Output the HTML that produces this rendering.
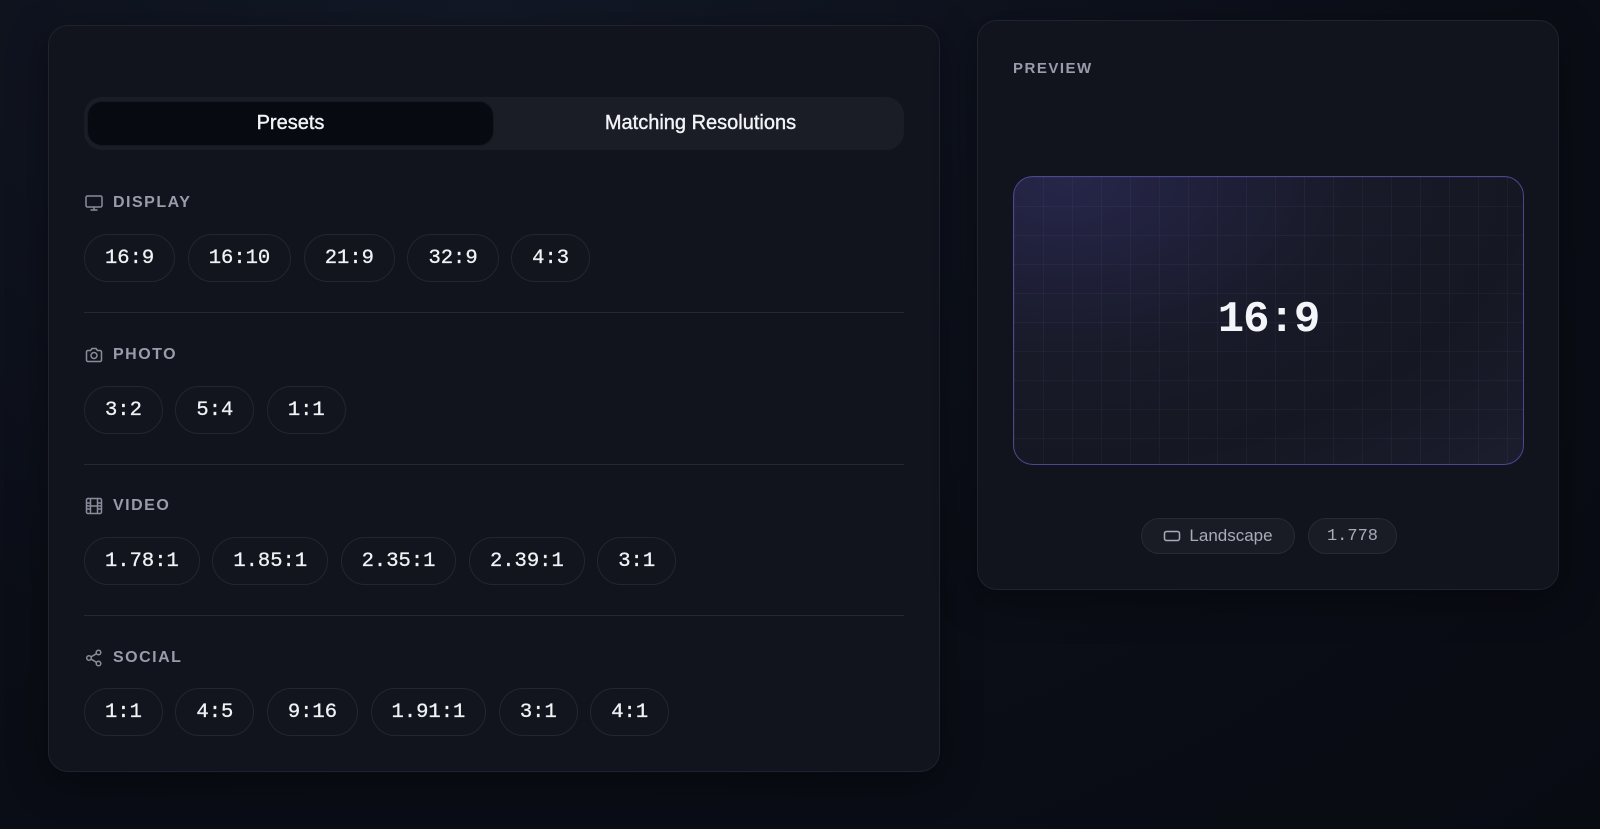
<!DOCTYPE html>
<html><head><meta charset="utf-8"><style>
*{box-sizing:border-box;margin:0;padding:0}
body{width:1600px;height:829px;overflow:hidden;background:radial-gradient(ellipse at 30% 0%,#121826 0%,#0b0e17 60%,#090b13 100%);font-family:"Liberation Sans",sans-serif;position:relative}
.card{position:absolute;background:#12141d;border:1px solid #1f2230;border-radius:20px;box-shadow:0 10px 40px rgba(0,0,0,.4)}
.tabs{position:absolute;left:35px;top:71px;width:820px;height:53px;background:#1a1c26;border-radius:18px}
.tab{position:absolute;top:4px;height:45px;width:407px;border-radius:15px;color:#f2f3f6;font-size:20px;display:flex;align-items:center;justify-content:center;-webkit-text-stroke:.4px #f2f3f6}
.tab.a{left:3px;background:#070a11;border:1px solid #151822}
.tab.b{left:413px}
.lbl{position:absolute;left:35px;color:#9a9cab;font-size:16px;font-weight:700;letter-spacing:1.5px;display:flex;align-items:center;gap:9px}
.lbl svg{width:20px;height:20px;stroke:#8a8c9b;fill:none;stroke-width:1.5}
.row{position:absolute;left:35px;display:flex;gap:12.5px}
.chip{height:48px;padding:0 20px;border:1px solid #23262f;border-radius:24px;background:#13151e;color:#f1f2f5;font-family:"Liberation Mono",monospace;font-size:20.5px;display:flex;align-items:center;-webkit-text-stroke:.3px #f1f2f5}
.div{position:absolute;left:35px;width:820px;height:1px;background:#262834}
.pv{position:absolute;left:35px;top:155px;width:511px;height:289px;border:1.5px solid #4d4690;border-radius:20px;overflow:hidden;
background-image:linear-gradient(rgba(120,120,170,.08) 1px,transparent 1px),linear-gradient(90deg,rgba(120,120,170,.08) 1px,transparent 1px),radial-gradient(ellipse at 10% 0%,#26264a 0%,#181a28 45%,#151722 70%,#1c1d2e 100%);
background-size:29px 29px,29px 29px,100% 100%;background-position:0 0,0 0,0 0}
.pv span{position:absolute;left:0;right:0;top:118px;text-align:center;font-family:"Liberation Mono",monospace;font-weight:700;font-size:44px;color:#f4f5f8;letter-spacing:-1px}
.bd{position:absolute;top:497px;height:36px;border:1px solid #272a35;background:#191b25;border-radius:18px;color:#a9abb8;font-size:17px;display:flex;align-items:center;justify-content:center;gap:8px}
</style></head><body>
<div class="card" style="left:48px;top:25px;width:892px;height:747px">
 <div class="tabs"><div class="tab a">Presets</div><div class="tab b">Matching Resolutions</div></div>
 <div class="lbl" style="top:167px"><svg viewBox="0 0 20 20"><rect x="2" y="3" width="16" height="11" rx="1.5"/><path d="M10 14v3M6.5 17h7"/></svg>DISPLAY</div>
 <div class="row" style="top:208px"><div class="chip">16:9</div><div class="chip">16:10</div><div class="chip">21:9</div><div class="chip">32:9</div><div class="chip">4:3</div></div>
 <div class="div" style="top:286px"></div>
 <div class="lbl" style="top:319px"><svg viewBox="0 0 20 20"><path d="M2.5 7a1.5 1.5 0 0 1 1.5-1.5h2.5l1.5-2h4l1.5 2H16A1.5 1.5 0 0 1 17.5 7v8A1.5 1.5 0 0 1 16 16.5H4A1.5 1.5 0 0 1 2.5 15z"/><circle cx="10" cy="10.5" r="3"/></svg>PHOTO</div>
 <div class="row" style="top:360px"><div class="chip">3:2</div><div class="chip">5:4</div><div class="chip">1:1</div></div>
 <div class="div" style="top:438px"></div>
 <div class="lbl" style="top:470px"><svg viewBox="0 0 20 20"><rect x="2.5" y="2.5" width="15" height="15" rx="1.5"/><path d="M6.5 2.5v15M13.5 2.5v15M2.5 7h4M2.5 10h15M2.5 13h4M13.5 7h4M13.5 13h4"/></svg>VIDEO</div>
 <div class="row" style="top:511px"><div class="chip">1.78:1</div><div class="chip">1.85:1</div><div class="chip">2.35:1</div><div class="chip">2.39:1</div><div class="chip">3:1</div></div>
 <div class="div" style="top:589px"></div>
 <div class="lbl" style="top:622px"><svg viewBox="0 0 20 20"><circle cx="14.5" cy="4.5" r="2.3"/><circle cx="5" cy="10" r="2.3"/><circle cx="14.5" cy="15.5" r="2.3"/><path d="M7 8.9l5.5-3.2M7 11.1l5.5 3.2"/></svg>SOCIAL</div>
 <div class="row" style="top:662px"><div class="chip">1:1</div><div class="chip">4:5</div><div class="chip">9:16</div><div class="chip">1.91:1</div><div class="chip">3:1</div><div class="chip">4:1</div></div>
</div>
<div class="card" style="left:977px;top:20px;width:582px;height:570px">
 <div style="position:absolute;left:35px;top:39px;color:#9a9cab;font-size:15px;font-weight:700;letter-spacing:1.5px">PREVIEW</div>
 <div class="pv"><span>16:9</span></div>
 <div class="bd" style="left:163px;width:154px"><svg width="18" height="14" viewBox="0 0 18 14" fill="none" stroke="#a9abb8" stroke-width="1.5"><rect x="1.5" y="2.5" width="15" height="9" rx="2"/></svg>Landscape</div>
 <div class="bd" style="left:330px;width:89px;font-family:'Liberation Mono',monospace">1.778</div>
</div>
</body></html>
